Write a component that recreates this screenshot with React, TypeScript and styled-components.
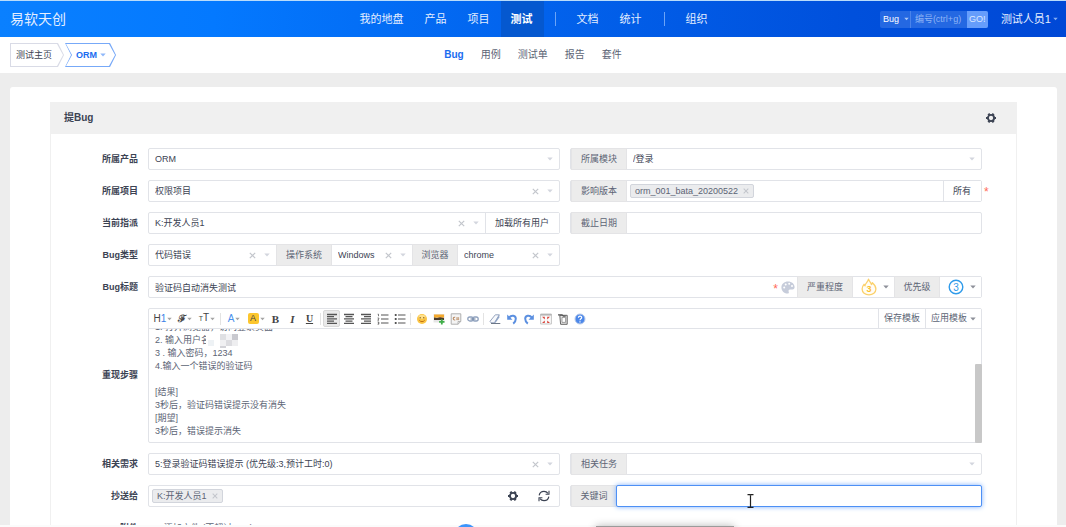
import React from "react";
import styled, { createGlobalStyle, css } from "styled-components";

const C = {
  text: "#3c4353",
  muted: "#5c6475",
  border: "#e1e3e8",
  addon: "#ececec",
  blue: "#1a6cf0",
  caret: "#d3d6de",
  icon: "#555555",
};

const GlobalStyle = createGlobalStyle`
  *, *::before, *::after { box-sizing: border-box; }
  body {
    margin: 0;
    background: #ffffff;
    color: ${C.text};
    font: 9px/13px "Liberation Sans", "Noto Sans CJK SC", sans-serif;
  }
  button, input, select { font: inherit; color: inherit; margin: 0; }
  button { cursor: pointer; }
  a { color: inherit; text-decoration: none; }
`;

/* ---------- shell ---------- */

const Shell = styled.div`
  position: relative;
  height: 100vh;
  display: flex;
  flex-direction: column;
  overflow: hidden;
  border-top: 1px solid #b9dcfb;
`;

const Header = styled.header`
  flex: none;
  height: 36px;
  display: grid;
  grid-template-columns: 1fr auto 1fr;
  align-items: center;
  padding: 0 8px 0 10px;
  color: #e4eeff;
  background: linear-gradient(90deg, #0a80ff 0%, #0479ff 20%, #0264ee 48%, #0050dc 80%, #0048d6 100%);
`;

const Logo = styled.a`
  font-size: 14px;
  line-height: 20px;
`;

const MainNav = styled.nav`
  height: 36px;
  display: flex;
  font-size: 11px;
  line-height: 36px;
`;

const NavLink = styled.a<{ $active?: boolean }>`
  padding: 0 11px 0 10px;
  ${(p) =>
    p.$active &&
    css`
      color: #ffffff;
      font-weight: bold;
      background: #0558cf;
    `}
`;

const NavDivider = styled.span`
  width: 1px;
  height: 14px;
  margin: 11px;
  background: #6ba4f7;
`;

const HeaderTools = styled.div`
  display: flex;
  justify-content: flex-end;
  align-items: center;
  gap: 13px;
`;

const SearchForm = styled.form`
  display: flex;
  height: 17px;
  border-radius: 2px;
  overflow: hidden;
  background: #2468e2;
`;

const SearchType = styled.label`
  display: flex;
  align-items: center;
  gap: 4px;
  width: 31px;
  padding-left: 3px;
  border-right: 1px solid #4a83ea;
`;

const BareSelect = styled.select`
  appearance: none;
  flex: 1 1 0;
  min-width: 0;
  height: 100%;
  padding: 0;
  border: 0;
  outline: 0;
  background: transparent;
`;

const SearchSelect = styled(BareSelect)`
  flex: none;
  width: 17px;
  color: #ffffff;
`;

const SearchInput = styled.input`
  width: 56px;
  padding: 0 4px;
  border: 0;
  outline: 0;
  background: transparent;
  &::placeholder {
    color: #8fb4f5;
    opacity: 1;
  }
`;

const GoButton = styled.button`
  width: 21px;
  padding: 0;
  border: 0;
  color: #dbe8ff;
  background: #669dfb;
`;

const UserButton = styled.button`
  display: flex;
  align-items: center;
  gap: 2px;
  padding: 0;
  border: 0;
  background: none;
  font-size: 11px;
  line-height: 16px;
`;

const SubHeader = styled.div`
  flex: none;
  height: 36px;
  display: grid;
  grid-template-columns: 1fr auto 1fr;
  align-items: center;
  padding: 0 10px;
  background: #ffffff;
`;

const Crumbs = styled.nav`
  display: flex;
  gap: 1px;
`;

const Crumb = styled.a<{ $current?: boolean }>`
  --shape: ${(p) =>
    p.$current
      ? "polygon(0 0, calc(100% - 6px) 0, 100% 50%, calc(100% - 6px) 100%, 0 100%, 6px 50%)"
      : "polygon(0 0, calc(100% - 6px) 0, 100% 50%, calc(100% - 6px) 100%, 0 100%)"};
  position: relative;
  z-index: 0;
  display: flex;
  align-items: center;
  gap: 3px;
  height: 24px;
  padding: ${(p) => (p.$current ? "0 10px 0 11px" : "0 12px 0 6px")};
  color: ${(p) => (p.$current ? C.blue : C.text)};
  font-weight: ${(p) => (p.$current ? "bold" : "normal")};
  background: ${(p) => (p.$current ? "#77a9f8" : "#d9dbe6")};
  clip-path: var(--shape);
  &::before {
    content: "";
    position: absolute;
    z-index: -1;
    inset: 1px;
    background: #ffffff;
    clip-path: var(--shape);
  }
`;

const SubNav = styled.nav`
  display: flex;
  gap: 17px;
  font-size: 10px;
  line-height: 16px;
  color: ${C.muted};
`;

const SubLink = styled.a<{ $active?: boolean }>`
  ${(p) =>
    p.$active &&
    css`
      color: ${C.blue};
      font-weight: bold;
    `}
`;

const Page = styled.main`
  flex: 1 1 0;
  min-height: 0;
  overflow: hidden;
  padding: 14px 9px 0 10px;
  background: #ededed;
`;

const Card = styled.div`
  padding: 15px 40px 40px;
  border-radius: 3px;
  background: #ffffff;
`;

const Panel = styled.section`
  border: solid #f0f0f0;
  border-width: 0 1px;
`;

const PanelHeader = styled.div`
  height: 32px;
  display: flex;
  align-items: center;
  justify-content: space-between;
  padding: 0 19px 0 13px;
  background: #f0f0f0;
`;

const PanelTitle = styled.h1`
  margin: 0;
  font-size: 10px;
  line-height: 16px;
`;

const IconButton = styled.button`
  display: flex;
  align-items: center;
  justify-content: center;
  padding: 0;
  border: 0;
  background: none;
`;

/* ---------- form ---------- */

const Form = styled.form`
  display: flex;
  flex-direction: column;
  gap: 10px;
  padding: 14px 34px 0 0;
`;

const Row = styled.div`
  display: grid;
  grid-template-columns: 87px minmax(0, 1fr);
  column-gap: 10px;
`;

const RowLabel = styled.label`
  align-self: center;
  text-align: right;
  font-weight: bold;
`;

const Halves = styled.div`
  display: grid;
  grid-template-columns: minmax(0, 1fr) minmax(0, 1fr);
  column-gap: 10px;
`;

const Group = styled.div`
  position: relative;
  display: flex;
  height: 22px;
  border: 1px solid ${C.border};
  border-radius: 2px;
  background: #ffffff;
`;

const Addon = styled.label<{ $narrow?: boolean }>`
  flex: none;
  width: ${(p) => (p.$narrow ? 46 : 56)}px;
  margin: -1px 0;
  border: 1px solid #e4e4e6;
  line-height: 20px;
  text-align: center;
  color: ${C.muted};
  background: ${C.addon};
`;

const Field = styled.div<{ $grow?: number }>`
  flex: ${(p) => p.$grow ?? 1} 1 0;
  min-width: 0;
  display: flex;
  align-items: center;
  padding: 0 6px;
`;

const TextInput = styled.input<{ $focused?: boolean }>`
  flex: 1 1 0;
  min-width: 0;
  height: 20px;
  padding: 0 6px;
  border: 0;
  outline: 0;
  background: transparent;
  ${(p) =>
    p.$focused &&
    css`
      height: 22px;
      margin: -1px;
      border: 1px solid #4d90f5;
      border-radius: 2px;
      background: #ffffff;
      box-shadow: 0 0 5px #7fb0fa;
    `}
`;

const ClearButton = styled.button`
  display: flex;
  margin-right: 8px;
  padding: 0;
  border: 0;
  background: none;
`;

const SideButton = styled.button`
  flex: none;
  padding: 0 10px 0 9px;
  border: 0;
  border-left: 1px solid ${C.border};
  background: #ffffff;
`;

const Tag = styled.span`
  display: flex;
  align-items: center;
  gap: 5px;
  height: 14px;
  margin-left: -3px;
  padding: 0 4px;
  border: 1px solid #d2d5dc;
  border-radius: 2px;
  background: #ebecee;
  color: ${C.muted};
`;

const Spacer = styled.span`
  flex: 1;
`;

const Star = styled.span<{ $outside?: boolean }>`
  color: #ff6a58;
  font-size: 12px;
  line-height: 12px;
  height: 8px;
  ${(p) =>
    p.$outside &&
    css`
      position: absolute;
      left: 100%;
      top: 5px;
      margin-left: 3px;
    `}
`;

const TitleTools = styled.div`
  display: flex;
  align-items: center;
  gap: 3px;
  padding-right: 2px;
`;

const Picker = styled.button`
  flex: none;
  width: 41px;
  display: flex;
  align-items: center;
  justify-content: space-between;
  padding: 0 5px 0 8px;
  border: 0;
  background: #ffffff;
`;

const CcTools = styled.div`
  display: flex;
  gap: 19px;
  padding-right: 3px;
`;

/* ---------- rich text editor ---------- */

const Editor = styled.div`
  position: relative;
  height: 135px;
  display: flex;
  flex-direction: column;
  border: 1px solid ${C.border};
  border-radius: 2px;
`;

const Toolbar = styled.div`
  flex: none;
  height: 20px;
  display: flex;
  padding-left: 3px;
  border-bottom: 1px solid ${C.border};
  color: #444444;
`;

const Tool = styled.button<{ $menu?: boolean; $pressed?: boolean }>`
  flex: none;
  width: ${(p) => (p.$menu ? 22 : 17)}px;
  height: 17px;
  margin-top: 1px;
  display: flex;
  align-items: center;
  justify-content: center;
  gap: 1px;
  padding: 0;
  border: 1px solid ${(p) => (p.$pressed ? "#d8d8d8" : "transparent")};
  border-radius: 2px;
  background: ${(p) => (p.$pressed ? "#e9e9e9" : "none")};
`;

const ToolDivider = styled.span`
  width: 1px;
  height: 12px;
  margin: 4px 2px 0;
  background: #e3e3e3;
`;

const Glyph = styled.span<{ $serif?: boolean; $size?: number; $color?: string }>`
  font-family: ${(p) =>
    p.$serif ? `"Liberation Serif", "DejaVu Serif", serif` : `"Liberation Sans", "DejaVu Sans", sans-serif`};
  font-size: ${(p) => p.$size ?? 10}px;
  line-height: 12px;
  color: ${(p) => p.$color ?? "inherit"};
`;

const Marker = styled.span`
  width: 11px;
  border-radius: 2px;
  line-height: 11px;
  background: #fcc62e;
`;

const EditorText = styled.div`
  flex: 1 1 0;
  min-height: 0;
  display: flex;
  flex-direction: column;
  justify-content: flex-end;
  overflow: hidden;
  padding: 0 12px 4px 6px;
  outline: 0;
  color: ${C.muted};
`;

const Line = styled.p`
  flex: none;
  height: 13px;
  margin: 0;
  white-space: pre;
`;

const Redacted = styled.svg`
  position: absolute;
  left: 57px;
  top: 25px;
`;

const ScrollThumb = styled.span`
  position: absolute;
  right: -1px;
  bottom: -1px;
  width: 7px;
  height: 79px;
  border-radius: 1px;
  background: #c8c8c8;
`;

const TemplateButton = styled.button`
  display: flex;
  align-items: center;
  gap: 3px;
  padding: 0 5px;
  border: 0;
  border-left: 1px solid ${C.border};
  background: #ffffff;
  color: ${C.muted};
`;

const Attach = styled.button`
  display: flex;
  align-items: center;
  gap: 4px;
  height: 22px;
  padding: 0 8px;
  border: 0;
  background: none;
  color: ${C.muted};
`;

/* ---------- things floating over the page ---------- */

const BottomEdge = styled.div`
  flex: none;
  height: 2px;
  background: #fbfbfb;
`;

const Bubble = styled.span`
  position: absolute;
  left: calc(50% - 79px);
  bottom: -21px;
  width: 24px;
  height: 24px;
  border-radius: 50%;
  background: #3d95fb;
`;

const Dock = styled.span`
  position: absolute;
  left: calc(50% + 63px);
  bottom: -19px;
  width: 138px;
  height: 20px;
  background: #9b9b9b;
  box-shadow: 0 0 8px #b8b8b8;
`;

const Pointer = styled.svg`
  position: absolute;
  left: 176px;
  top: 8px;
`;

/* ---------- icons ---------- */

const Caret = ({ color = C.caret, w = 6 }: { color?: string; w?: number }) => (
  <svg width={w} height="4" viewBox="0 0 6 4" aria-hidden="true">
    <path d="M0.3 0.5h5.4L3 3.5z" fill={color} />
  </svg>
);

const Cross = ({ size = 7 }: { size?: number }) => (
  <svg width={size} height={size} viewBox="0 0 7 7" aria-hidden="true">
    <path d="M0.8 0.8l5.4 5.4M6.2 0.8L0.8 6.2" stroke="#c3c6cc" strokeWidth="1.2" />
  </svg>
);

const Gear = () => (
  <svg width="12" height="12" viewBox="0 0 12 12" aria-hidden="true">
    <circle cx="6" cy="6" r="3.1" fill="none" stroke="#3c4353" strokeWidth="1.9" />
    <g stroke="#3c4353" strokeWidth="2.2">
      {[30, 90, 150, 210, 270, 330].map((a) => (
        <path key={a} d="M6 2.6V1" transform={`rotate(${a} 6 6)`} />
      ))}
    </g>
  </svg>
);

const Refresh = () => (
  <svg width="12" height="12" viewBox="0 0 12 12" fill="none" stroke="#3c4353" aria-hidden="true">
    <path d="M1.2 5.4C1.6 3 3.6 1.4 6 1.4c1.7 0 3.1.8 4 2M10.8 6.6C10.4 9 8.4 10.6 6 10.6c-1.7 0-3.1-.8-4-2" strokeWidth="1.2" />
    <path d="M11 .8v3.4H7.6M1 11.2V7.8h3.4" strokeWidth="1.1" />
  </svg>
);

const Palette = () => (
  <svg width="14" height="13" viewBox="0 0 14 13" aria-hidden="true">
    <path d="M7 .4C3.2.4.4 3 .4 6.3c0 3.4 2.6 6.3 6 6.3 1.5 0 1.7-.9 1.3-1.8-.5-1.2-.1-2.3 1.5-2.3h2.3c1.4 0 2.1-.9 2.1-2.4C13.6 2.8 10.8.4 7 .4z" fill="#c6ccda" />
    <g fill="#fff">
      <circle cx="3.2" cy="6.4" r="1" />
      <circle cx="4.7" cy="3.5" r="1" />
      <circle cx="8.2" cy="2.8" r="1" />
      <circle cx="11" cy="5" r="1" />
    </g>
  </svg>
);

const Flame = () => (
  <svg width="16" height="18" viewBox="0 0 16 18" aria-hidden="true">
    <path
      d="M7.5 1.2c.3 1.9 2.6 3 2.9 5.3.6-.4.9-1 1-1.8 1.9 1.7 3.5 4 3.5 6.3 0 3.4-3 5.8-6.9 5.8S1.1 14.400 1.1 11c0-1.800.8-3.400 1.9-4.700.2.700.5 1.200 1 1.500C4.200 5.200 6.900 4.200 7.500 1.200z"
      fill="#fffdf6"
      stroke="#fbd16c"
      strokeWidth="1.3"
      strokeLinejoin="round"
    />
    <text x="8" y="14" textAnchor="middle" fontSize="9" fontWeight="bold" fill="#fbc02d">
      3
    </text>
  </svg>
);

const Priority = () => (
  <svg width="16" height="16" viewBox="0 0 16 16" aria-hidden="true">
    <circle cx="8" cy="8" r="6.8" fill="#fff" stroke="#2f9bea" strokeWidth="1.4" />
    <text x="8" y="11.5" textAnchor="middle" fontSize="10" fill="#2f9bea">
      3
    </text>
  </svg>
);

const Lines = ({ d }: { d: string }) => (
  <svg width="12" height="12" viewBox="0 0 12 12" aria-hidden="true">
    <path d={d} stroke={C.icon} strokeWidth="1.3" fill="none" />
  </svg>
);

const ALIGN_LEFT = "M1 1.500h10M1 3.700h7M1 5.900h10M1 8.100h7M1 10.300h10";
const ALIGN_CENTER = "M1 1.500h10M2.500 3.700h7M1 5.900h10M2.500 8.100h7M1 10.300h10";
const ALIGN_RIGHT = "M1 1.500h10M4 3.700h7M1 5.900h10M4 8.100h7M1 10.300h10";

const OrderedList = () => (
  <svg width="12" height="12" viewBox="0 0 12 12" fill="none" stroke={C.icon} aria-hidden="true">
    <path d="M4 2h7.500M4 6h7.500M4 10h7.500" strokeWidth="1.2" />
    <path d="M.7 1.200h.8v2M.6 5h1.200v1L.7 7.200h1.300M.6 9h1.200v2.200H.6M1 10.100h.8" strokeWidth=".8" />
  </svg>
);

const BulletList = () => (
  <svg width="12" height="12" viewBox="0 0 12 12" aria-hidden="true">
    <path d="M4 2h7.500M4 6h7.500M4 10h7.500" stroke={C.icon} strokeWidth="1.2" />
    <path d="M.8 1.100h1.800v1.800H.8zM.8 5.100h1.800v1.800H.8zM.8 9.100h1.800v1.800H.8z" fill={C.icon} />
  </svg>
);

const Smile = () => (
  <svg width="12" height="12" viewBox="0 0 12 12" aria-hidden="true">
    <circle cx="6" cy="6" r="5" fill="#fbc544" />
    <ellipse cx="6" cy="3.8" rx="3.5" ry="2" fill="#fde08c" />
    <circle cx="4.2" cy="4.8" r=".7" fill="#8a5a12" />
    <circle cx="7.8" cy="4.8" r=".7" fill="#8a5a12" />
    <path d="M3.3 7.2c1 1.9 4.4 1.9 5.4 0" fill="none" stroke="#b8660f" strokeWidth=".9" />
  </svg>
);

const Picture = () => (
  <svg width="12" height="12" viewBox="0 0 12 12" aria-hidden="true">
    <path d="M.5 1h11v8.500H.5z" fill="#e6e6e6" />
    <path d="M1 1.500h10v3.200H1z" fill="#f5a92c" />
    <path d="M1 4.500l3 .6 3-.8 4 .6V7H1z" fill="#4b3b2a" />
    <path d="M8.800 6.200v5.400M6.100 8.900h5.400" stroke="#3fae49" strokeWidth="1.8" />
  </svg>
);

const CodePage = () => (
  <svg width="12" height="12" viewBox="0 0 12 12" aria-hidden="true">
    <path d="M1.200.8h9.600v7.700l-2.800 2.700H1.200z" fill="#f4f4f4" stroke="#b0b0b0" strokeWidth="1" />
    <path d="M10.800 8.500H8v2.700" fill="none" stroke="#b0b0b0" strokeWidth=".9" />
    <path d="M5.200 4.300c-2.600-.6-2.600 3.200 0 2.600" fill="none" stroke="#b98a62" strokeWidth="1.1" />
    <path d="M7 4.200v3M8.400 4.200v3M6.300 5h2.900M6.300 6.400h2.900" stroke="#b98a62" strokeWidth=".6" />
  </svg>
);

const Chain = () => (
  <svg width="12" height="12" viewBox="0 0 12 12" fill="none" aria-hidden="true">
    <rect x=".8" y="4" width="5.4" height="4" rx="2" stroke="#8fa1bd" strokeWidth="1.3" />
    <rect x="5.8" y="4" width="5.4" height="4" rx="2" stroke="#8fa1bd" strokeWidth="1.3" />
    <path d="M3.500 6h5" stroke="#7588a6" strokeWidth="1.2" />
  </svg>
);

const Eraser = () => (
  <svg width="12" height="12" viewBox="0 0 12 12" aria-hidden="true">
    <path d="M1 8.300L6.300 1.800h4L5.400 9.800H2z" fill="#f7f9fc" stroke="#8b9bb8" strokeWidth=".9" strokeLinejoin="round" />
    <path d="M5.400 9.800l4.900-8v2.600L6.600 9.800z" fill="#8ea3c6" />
    <path d="M2 10.500h9.300" stroke="#6c7787" strokeWidth="1" />
  </svg>
);

const Undo = ({ flip }: { flip?: boolean }) => (
  <svg width="12" height="12" viewBox="0 0 12 12" aria-hidden="true">
    <g transform={flip ? "translate(12 0) scale(-1 1)" : undefined}>
      <path d="M3 4.600C5.500 1.600 9.800 2.400 9.800 5.800c0 2-1 3.600-2.600 4.800" fill="none" stroke="#5b8fe0" strokeWidth="2" />
      <path d="M1.200 1.500v5.300h5.300z" fill="#5b8fe0" />
    </g>
  </svg>
);

const Fullscreen = () => (
  <svg width="12" height="12" viewBox="0 0 12 12" aria-hidden="true">
    <path d="M.6 1h10.800v10H.6z" fill="#fbfbfb" stroke="#bdbdbd" strokeWidth=".9" />
    <path d="M.6 1h10.800v1.600H.6z" fill="#b5b5b5" />
    <path d="M2 3.800h2.800v2.600zM10 3.800H7.200v2.600zM2 10h2.800V7.400zM10 10H7.200V7.400z" fill="#d9453c" />
  </svg>
);

const Paste = () => (
  <svg width="12" height="12" viewBox="0 0 12 12" fill="none" aria-hidden="true">
    <path d="M2.800 2.300h7.400v9H3.600z" fill="#e8e8e8" stroke="#666" strokeWidth="1" />
    <path d="M1 1.800h4l1.500 1.400h2.200" stroke="#555" strokeWidth="1.2" />
    <path d="M5 4.400h3.600v5H5z" fill="#fff" stroke="#888" strokeWidth=".8" />
  </svg>
);

const Help = () => (
  <svg width="12" height="12" viewBox="0 0 12 12" aria-hidden="true">
    <circle cx="6" cy="6" r="5" fill="#4b87ea" stroke="#b9cbe9" strokeWidth="1" />
    <path d="M4.400 4.700c0-2.200 3.300-2.100 3.300-.2C7.700 5.800 6 5.700 6 7.200M6 8.200v1.200" fill="none" stroke="#fff" strokeWidth="1.2" />
  </svg>
);

/* ---------- composed parts ---------- */

type PickProps = { id: string; label: string; value?: string; clearable?: boolean; grow?: number };

const SelectField = ({ id, label, value = "", clearable, grow }: PickProps) => (
  <Field $grow={grow}>
    <BareSelect id={id} aria-label={label} defaultValue={value}>
      <option value={value}>{value}</option>
    </BareSelect>
    {clearable && (
      <ClearButton type="button" aria-label={`清除${label}`}>
        <Cross />
      </ClearButton>
    )}
    <Caret />
  </Field>
);

const MenuTool = ({ label, children }: { label: string; children: React.ReactNode }) => (
  <Tool type="button" $menu aria-label={label}>
    {children}
    <Caret color="#a5a5a5" w={5} />
  </Tool>
);

const tools: [string, React.ReactNode][][] = [
  [
    ["左对齐", <Lines d={ALIGN_LEFT} />],
    ["居中", <Lines d={ALIGN_CENTER} />],
    ["右对齐", <Lines d={ALIGN_RIGHT} />],
    ["编号", <OrderedList />],
    ["项目符号", <BulletList />],
  ],
  [
    ["表情", <Smile />],
    ["图片", <Picture />],
    ["代码", <CodePage />],
    ["链接", <Chain />],
  ],
  [
    ["清除格式", <Eraser />],
    ["撤销", <Undo />],
    ["重做", <Undo flip />],
    ["全屏", <Fullscreen />],
    ["粘贴", <Paste />],
    ["帮助", <Help />],
  ],
];

const steps = [
  "1. 打开浏览器，访问登录页面",
  "2. 输入用户名",
  "3 . 输入密码，1234",
  "4.输入一个错误的验证码",
  "",
  "[结果]",
  "3秒后，验证码错误提示没有消失",
  "[期望]",
  "3秒后，错误提示消失",
];

const StepsEditor = () => (
  <Editor>
    <Toolbar>
      <MenuTool label="段落">
        <Glyph>
          H<Glyph $color="#3b82e6">1</Glyph>
        </Glyph>
      </MenuTool>
      <MenuTool label="字体">
        <Glyph $serif>
          <b>ℱ</b>
        </Glyph>
      </MenuTool>
      <MenuTool label="字号">
        <Glyph>
          <Glyph $size={7}>T</Glyph>T
        </Glyph>
      </MenuTool>
      <ToolDivider />
      <MenuTool label="文字颜色">
        <Glyph $color="#4a90ee">A</Glyph>
      </MenuTool>
      <MenuTool label="背景颜色">
        <Marker>A</Marker>
      </MenuTool>
      <Tool type="button" aria-label="粗体">
        <Glyph $serif $size={11}>
          <b>B</b>
        </Glyph>
      </Tool>
      <Tool type="button" aria-label="斜体">
        <Glyph $serif $size={11}>
          <b>
            <i>I</i>
          </b>
        </Glyph>
      </Tool>
      <Tool type="button" aria-label="下划线">
        <Glyph $serif>
          <b>
            <u>U</u>
          </b>
        </Glyph>
      </Tool>
      {tools.map((group, g) => (
        <React.Fragment key={g}>
          <ToolDivider />
          {group.map(([label, icon]) => (
            <Tool key={label} type="button" aria-label={label} $pressed={label === "左对齐"}>
              {icon}
            </Tool>
          ))}
        </React.Fragment>
      ))}
      <Spacer />
      <TemplateButton type="button">保存模板</TemplateButton>
      <TemplateButton type="button">
        应用模板
        <Caret color="#8d9099" />
      </TemplateButton>
    </Toolbar>
    <EditorText role="textbox" aria-labelledby="steps-label" aria-multiline="true" tabIndex={0}>
      {steps.map((s, i) => (
        <Line key={i}>{s}</Line>
      ))}
    </EditorText>
    <Redacted width="34" height="14" aria-hidden="true">
      <path d="M0 0h34v12H0z" fill="#fff" />
      <path d="M2 6h6v6H2z" fill="#eef2f5" />
      <path d="M14 0h6v6h-6z" fill="#dfe0e3" />
      <path d="M20 0h6v6h-6z" fill="#f2f2f4" />
      <path d="M26 0h6v6h-6z" fill="#c9c9cf" />
      <path d="M14 6h6v6h-6z" fill="#f0f0f2" />
      <path d="M20 6h6v6h-6z" fill="#dcdce0" />
      <path d="M26 6h6v6h-6z" fill="#eeeef0" />
      <path d="M14 12h6v2h-6z" fill="#d3d3d8" />
    </Redacted>
    <ScrollThumb />
  </Editor>
);

export default function App() {
  return (
    <Shell>
      <GlobalStyle />
      <Header>
        <Logo href="#">易软天创</Logo>
        <MainNav aria-label="主导航">
          <NavLink href="#">我的地盘</NavLink>
          <NavLink href="#">产品</NavLink>
          <NavLink href="#">项目</NavLink>
          <NavLink href="#" $active>
            测试
          </NavLink>
          <NavDivider />
          <NavLink href="#">文档</NavLink>
          <NavLink href="#">统计</NavLink>
          <NavDivider />
          <NavLink href="#">组织</NavLink>
        </MainNav>
        <HeaderTools>
          <SearchForm>
            <SearchType>
              <SearchSelect aria-label="搜索类型">
                <option>Bug</option>
              </SearchSelect>
              <Caret color="#a9c6f8" w={5} />
            </SearchType>
            <SearchInput aria-label="编号" placeholder="编号(ctrl+g)" />
            <GoButton type="button">GO!</GoButton>
          </SearchForm>
          <UserButton type="button">
            测试人员1
            <Caret color="#86aef2" w={5} />
          </UserButton>
        </HeaderTools>
      </Header>

      <SubHeader>
        <Crumbs aria-label="位置">
          <Crumb href="#">测试主页</Crumb>
          <Crumb href="#" $current>
            ORM
            <Caret color="#8fb8fa" />
          </Crumb>
        </Crumbs>
        <SubNav aria-label="测试">
          <SubLink href="#" $active>
            Bug
          </SubLink>
          <SubLink href="#">用例</SubLink>
          <SubLink href="#">测试单</SubLink>
          <SubLink href="#">报告</SubLink>
          <SubLink href="#">套件</SubLink>
        </SubNav>
      </SubHeader>

      <Page>
        <Card>
          <Panel>
            <PanelHeader>
              <PanelTitle>提Bug</PanelTitle>
              <IconButton type="button" aria-label="设置">
                <Gear />
              </IconButton>
            </PanelHeader>
            <Form>
              <Row>
                <RowLabel htmlFor="product">所属产品</RowLabel>
                <Halves>
                  <Group>
                    <SelectField id="product" label="所属产品" value="ORM" />
                  </Group>
                  <Group>
                    <Addon htmlFor="module">所属模块</Addon>
                    <SelectField id="module" label="所属模块" value="/登录" />
                  </Group>
                </Halves>
              </Row>
              <Row>
                <RowLabel htmlFor="project">所属项目</RowLabel>
                <Halves>
                  <Group>
                    <SelectField id="project" label="所属项目" value="权限项目" clearable />
                  </Group>
                  <Group>
                    <Addon htmlFor="build">影响版本</Addon>
                    <Field>
                      <Tag>
                        orm_001_bata_20200522
                        <Cross size={6} />
                      </Tag>
                      <TextInput id="build" />
                    </Field>
                    <SideButton type="button">所有</SideButton>
                    <Star $outside>*</Star>
                  </Group>
                </Halves>
              </Row>
              <Row>
                <RowLabel htmlFor="assigned">当前指派</RowLabel>
                <Halves>
                  <Group>
                    <SelectField id="assigned" label="当前指派" value="K:开发人员1" clearable />
                    <SideButton type="button">加载所有用户</SideButton>
                  </Group>
                  <Group>
                    <Addon htmlFor="deadline">截止日期</Addon>
                    <TextInput id="deadline" />
                  </Group>
                </Halves>
              </Row>
              <Row>
                <RowLabel htmlFor="type">Bug类型</RowLabel>
                <Halves>
                  <Group>
                    <SelectField id="type" label="Bug类型" value="代码错误" clearable grow={115} />
                    <Addon htmlFor="os">操作系统</Addon>
                    <SelectField id="os" label="操作系统" value="Windows" clearable grow={68} />
                    <Addon $narrow htmlFor="browser">
                      浏览器
                    </Addon>
                    <SelectField id="browser" label="浏览器" value="chrome" clearable grow={89} />
                  </Group>
                </Halves>
              </Row>
              <Row>
                <RowLabel htmlFor="title">Bug标题</RowLabel>
                <Group>
                  <TextInput id="title" defaultValue="验证码自动消失测试" />
                  <TitleTools>
                    <Star>*</Star>
                    <IconButton type="button" aria-label="标题颜色">
                      <Palette />
                    </IconButton>
                  </TitleTools>
                  <Addon htmlFor="severity">严重程度</Addon>
                  <Picker id="severity" type="button">
                    <Flame />
                    <Caret color="#8d9099" />
                  </Picker>
                  <Addon $narrow htmlFor="pri">
                    优先级
                  </Addon>
                  <Picker id="pri" type="button">
                    <Priority />
                    <Caret color="#8d9099" />
                  </Picker>
                </Group>
              </Row>
              <Row>
                <RowLabel as="span" id="steps-label">
                  重现步骤
                </RowLabel>
                <StepsEditor />
              </Row>
              <Row>
                <RowLabel htmlFor="story">相关需求</RowLabel>
                <Halves>
                  <Group>
                    <SelectField
                      id="story"
                      label="相关需求"
                      value="5:登录验证码错误提示 (优先级:3,预计工时:0)"
                      clearable
                    />
                  </Group>
                  <Group>
                    <Addon htmlFor="task">相关任务</Addon>
                    <SelectField id="task" label="相关任务" />
                  </Group>
                </Halves>
              </Row>
              <Row>
                <RowLabel htmlFor="cc">抄送给</RowLabel>
                <Halves>
                  <Group>
                    <Field>
                      <Tag>
                        K:开发人员1
                        <Cross size={6} />
                      </Tag>
                      <TextInput id="cc" />
                      <CcTools>
                        <IconButton type="button" aria-label="联系人设置">
                          <Gear />
                        </IconButton>
                        <IconButton type="button" aria-label="刷新">
                          <Refresh />
                        </IconButton>
                      </CcTools>
                    </Field>
                  </Group>
                  <Group>
                    <Addon $narrow htmlFor="keywords">
                      关键词
                    </Addon>
                    <TextInput id="keywords" $focused />
                    <Pointer width="7" height="14" viewBox="0 0 7 14" aria-hidden="true">
                      <path d="M.5.7h2.300l.7.600.7-.600h2.300M.5 13.300h2.300l.7-.600.7.600h2.300M3.500 1.300v11.400" fill="none" stroke="#222" strokeWidth="1.2" />
                    </Pointer>
                  </Group>
                </Halves>
              </Row>
              <Row>
                <RowLabel htmlFor="files">附件</RowLabel>
                <Attach id="files" type="button">
                  + 添加文件 (不超过50M)
                </Attach>
              </Row>
            </Form>
          </Panel>
        </Card>
      </Page>
      <BottomEdge />
      <Bubble />
      <Dock />
    </Shell>
  );
}
